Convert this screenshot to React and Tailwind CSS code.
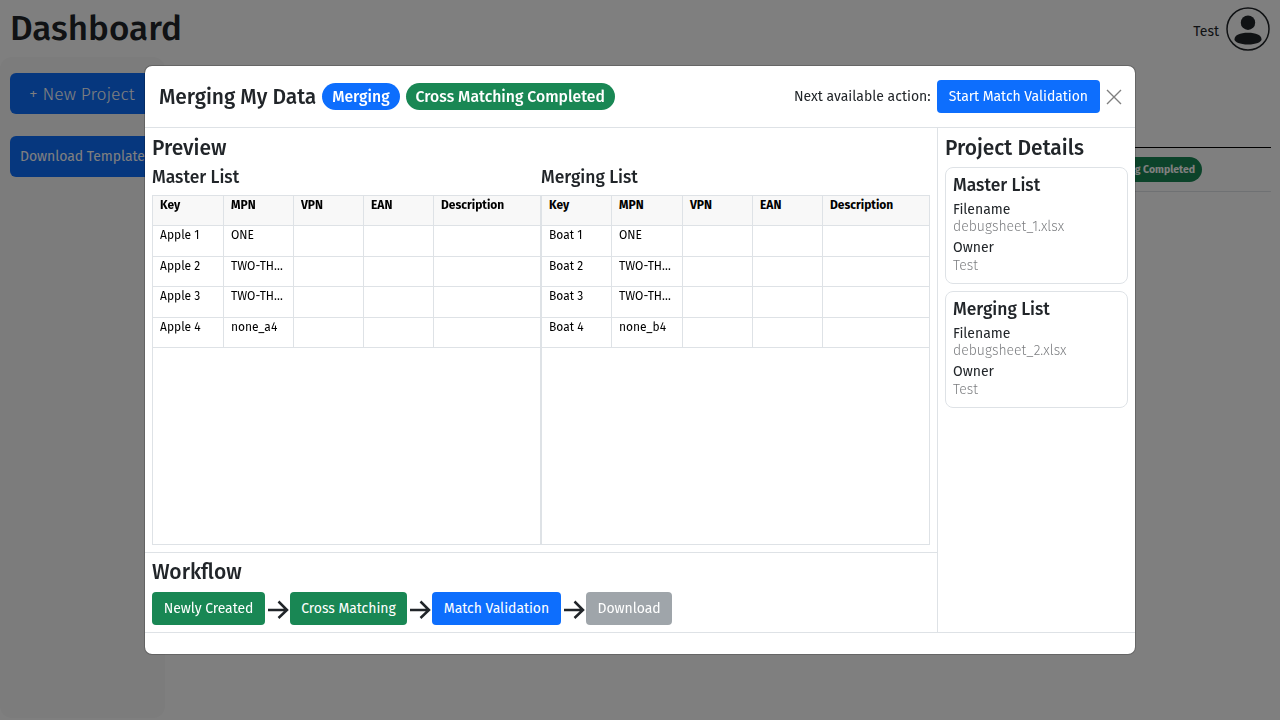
import React from "react";

const font = "font-['Fira_Sans','Roboto','Noto_Sans',sans-serif]";
const cols = ["Key", "MPN", "VPN", "EAN", "Description"];

function PreviewTable({ rows, widths }) {
  return (
    <table className="w-[389px] h-[350px] table-fixed border-collapse border border-[#dee2e6] text-[12px] text-black">
      <thead>
        <tr className="h-[30px] bg-[#f8f8f8]">
          {cols.map((c, i) => (
            <th key={c} className={`border border-[#dee2e6] px-[7px] pb-[10px] text-left align-top font-bold leading-[18px] ${widths[i]}`}>{c}</th>
          ))}
        </tr>
      </thead>
      <tbody>
        {rows.map((r) => (
          <tr key={r[0]} className="h-[30.5px]">
            <td className="border border-[#dee2e6] px-[7px] align-top leading-[18px] truncate">{r[0]}</td>
            <td className="border border-[#dee2e6] px-[7px] align-top leading-[18px] truncate">{r[1]}</td>
            <td className="border border-[#dee2e6]" />
            <td className="border border-[#dee2e6]" />
            <td className="border border-[#dee2e6]" />
          </tr>
        ))}
        <tr><td colSpan={5} /></tr>
      </tbody>
    </table>
  );
}

function DetailCard({ title, file }) {
  return (
    <div className="rounded-[8px] border border-[#dee2e6] px-[7px] pt-[7px] h-[117px]">
      <h5 className="text-[17.5px] leading-[21px] font-medium text-[#212529] mb-[4.5px]">{title}</h5>
      <div className="text-[14px] leading-[17.5px] text-[#212529]">Filename</div>
      <div className="text-[14px] leading-[17.5px] text-[#212529]/60 font-light mb-[3.5px]">{file}</div>
      <div className="text-[14px] leading-[17.5px] text-[#212529]">Owner</div>
      <div className="text-[14px] leading-[17.5px] text-[#212529]/60 font-light">Test</div>
    </div>
  );
}

function Step({ label, cls }) {
  return <div className={`h-[33px] flex items-center justify-center rounded-[4px] text-[14px] tracking-[-0.05px] text-white ${cls}`}>{label}</div>;
}

function Arrow() {
  return (
    <svg className="w-[25px] h-[33px] shrink-0" viewBox="0 0 25 33" fill="none" stroke="#212529" strokeWidth="2.5">
      <path d="M3 18H22M13.5 9.5L22 18L13.5 26" />
    </svg>
  );
}

export default function App() {
  return (
    <div className={`relative w-[1280px] h-[720px] overflow-hidden bg-white text-[14px] text-[#212529] ${font}`}>
      <div className="flex items-center justify-between h-[57px] pl-[10px] pr-[10px]">
        <h1 className="text-[35px] leading-[55px] font-medium">Dashboard</h1>
        <div className="flex items-center gap-[7px] text-[14px]">
          <span className="mt-[5px]">Test</span>
          <svg width="44" height="44" viewBox="0 0 44 44" fill="none">
            <circle cx="22" cy="22" r="21" stroke="#212529" strokeWidth="1.5" />
            <circle cx="22" cy="15.7" r="7.2" fill="#212529" />
            <path d="M8.5 32.5C8.5 28 14 25.8 22 25.8S35.5 28 35.5 32.5C35.5 35 30 37.5 22 37.5S8.5 35 8.5 32.5Z" fill="#212529" />
          </svg>
        </div>
      </div>
      <div className="flex h-[663px]">
        <aside className="w-[165px] h-[661px] bg-[#f8f8f8] rounded-[12px] px-[10px] pt-[16px] flex flex-col gap-[22px]">
          <div className="h-[41px] w-[165px] shrink-0 rounded-[6px] bg-[#0d6efd] text-white text-[17.5px] font-light flex items-center pl-[19px] pt-[3px]">+ New Project</div>
          <div className="h-[41px] w-[165px] shrink-0 rounded-[6px] bg-[#0d6efd] text-white text-[14px] tracking-[-0.05px] flex items-center pl-[10px]">Download Template</div>
        </aside>
        <main className="flex-1 pl-[10px] pr-[9px] pt-[90px]">
          <div className="border-t border-black h-[44px] flex items-center justify-end pr-[69px]">
            <span className="h-[25px] rounded-full bg-[#198754] text-white text-[10.5px] font-bold flex items-center px-[7px]">Cross Matching Completed</span>
          </div>
          <div className="border-b border-[#dee2e6]" />
        </main>
      </div>

      <div className="fixed inset-0 bg-black/50" />

      <div className="fixed left-[144px] top-[65px] w-[992px] h-[590px] bg-white bg-clip-padding rounded-[8px] border border-black/20 flex flex-col overflow-hidden">
        <header className="h-[62px] shrink-0 border-b border-[#dee2e6] flex items-center pl-[14px] pr-[13px]">
          <h5 className="text-[21px] font-medium tracking-[-0.07px] mr-[6px] leading-none pt-[1px]">Merging My Data</h5>
          <span className="h-[27px] rounded-full bg-[#0d6efd] text-white text-[15.75px] font-medium flex items-center px-[10px] mr-[6px]">Merging</span>
          <span className="h-[27px] rounded-full bg-[#198754] text-white text-[15.75px] font-medium flex items-center px-[10px]">Cross Matching Completed</span>
          <span className="ml-auto text-[14px] mr-[6px]">Next available action:</span>
          <div className="h-[33px] flex items-center px-[12px] rounded-[4px] text-[14px] tracking-[-0.05px] text-white bg-[#0d6efd]">Start Match Validation</div>
          <svg className="ml-[6px]" width="16" height="16" viewBox="0 0 16 16" stroke="#7f7f7f" strokeWidth="1.4"><path d="M1 1l14 14M15 1L1 15" /></svg>
        </header>
        <div className="flex flex-1 min-h-0">
          <div className="w-[793px] border-r border-[#dee2e6] flex flex-col">
            <section className="h-[425px] border-b border-[#dee2e6] px-[7px]">
              <h4 className="text-[21px] leading-[25px] font-medium mt-[8px] h-[25px]">Preview</h4>
              <div className="flex text-[17.5px] font-medium leading-[21px] mt-[6px]">
                <h5 className="w-[389px]">Master List</h5>
                <h5>Merging List</h5>
              </div>
              <div className="flex mt-[7px]">
                <PreviewTable widths={["w-[71px]", "w-[70px]", "w-[70px]", "w-[70px]", "w-[107px]"]} rows={[["Apple 1","ONE"],["Apple 2","TWO-THREE"],["Apple 3","TWO-THREE"],["Apple 4","none_a4"]]} />
                <PreviewTable widths={["w-[70px]", "w-[71px]", "w-[70px]", "w-[70px]", "w-[107px]"]} rows={[["Boat 1","ONE"],["Boat 2","TWO-THREE"],["Boat 3","TWO-THREE"],["Boat 4","none_b4"]]} />
              </div>
            </section>
            <section className="px-[7px] pt-[7px]">
              <h4 className="text-[21px] leading-[25px] font-medium mb-[7px]">Workflow</h4>
              <div className="flex items-center">
                <Step label="Newly Created" cls="w-[113px] bg-[#198754]" />
                <Arrow />
                <Step label="Cross Matching" cls="w-[117px] bg-[#198754]" />
                <Arrow />
                <Step label="Match Validation" cls="w-[129px] bg-[#0d6efd]" />
                <Arrow />
                <Step label="Download" cls="w-[86px] bg-[#6c757d]/65" />
              </div>
            </section>
          </div>
          <aside className="flex-1 px-[7px] pt-[8px]">
            <h4 className="text-[21px] leading-[25px] font-medium mb-[6px]">Project Details</h4>
            <div className="flex flex-col gap-[7px]">
              <DetailCard title="Master List" file="debugsheet_1.xlsx" />
              <DetailCard title="Merging List" file="debugsheet_2.xlsx" />
            </div>
          </aside>
        </div>
        <footer className="h-[22px] shrink-0 border-t border-[#dee2e6]" />
      </div>
    </div>
  );
}
